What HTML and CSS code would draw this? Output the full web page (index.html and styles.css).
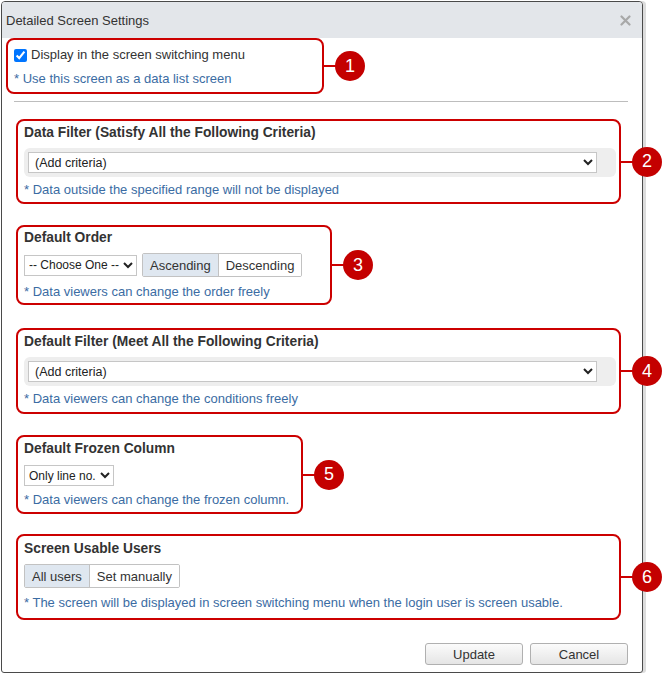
FILE: index.html
```html
<!DOCTYPE html>
<html>
<head>
<meta charset="utf-8">
<link rel="stylesheet" href="styles.css">
</head>
<body>
<div class="dialog">
  <div class="titlebar">
    <span class="title">Detailed Screen Settings</span>
    <svg class="close" width="11" height="11" viewBox="0 0 11 11"><path d="M1.5 1.5 L9.5 9.5 M9.5 1.5 L1.5 9.5" stroke="#a8a8a8" stroke-width="2.2" stroke-linecap="round"/></svg>
  </div>
  <div class="content">
    <section class="box box-menu">
      <label class="check-row"><input type="checkbox" checked> Display in the screen switching menu</label>
      <div class="note note-menu">* Use this screen as a data list screen</div>
      <span class="link"></span><span class="badge">1</span>
    </section>
    <hr class="sep">
    <section class="box box-wide box-filter">
      <div class="heading">Data Filter (Satisfy All the Following Criteria)</div>
      <div class="criteria-bar"><select class="criteria"><option>(Add criteria)</option></select></div>
      <div class="note note-tight">* Data outside the specified range will not be displayed</div>
      <span class="link"></span><span class="badge">2</span>
    </section>
    <section class="box box-order">
      <div class="heading">Default Order</div>
      <div class="controls">
        <select class="plain sel-order"><option>-- Choose One --</option></select>
        <div class="btn-group">
          <span class="seg active">Ascending</span><span class="seg">Descending</span>
        </div>
      </div>
      <div class="note">* Data viewers can change the order freely</div>
      <span class="link"></span><span class="badge">3</span>
    </section>
    <section class="box box-wide box-dfilter">
      <div class="heading">Default Filter (Meet All the Following Criteria)</div>
      <div class="criteria-bar"><select class="criteria"><option>(Add criteria)</option></select></div>
      <div class="note note-tight">* Data viewers can change the conditions freely</div>
      <span class="link"></span><span class="badge">4</span>
    </section>
    <section class="box box-frozen">
      <div class="heading">Default Frozen Column</div>
      <div class="controls controls-frozen">
        <select class="plain sel-frozen"><option>Only line no.</option></select>
      </div>
      <div class="note note-frozen">* Data viewers can change the frozen column.</div>
      <span class="link"></span><span class="badge">5</span>
    </section>
    <section class="box box-wide box-users">
      <div class="heading">Screen Usable Users</div>
      <div class="controls controls-users">
        <div class="btn-group">
          <span class="seg active">All users</span><span class="seg">Set manually</span>
        </div>
      </div>
      <div class="note note-users">* The screen will be displayed in screen switching menu when the login user is screen usable.</div>
      <span class="link"></span><span class="badge">6</span>
    </section>
  </div>
  <div class="footer">
    <button class="btn">Update</button>
    <button class="btn">Cancel</button>
  </div>
</div>
</body>
</html>
```

FILE: styles.css
```css
* { box-sizing: border-box; }
html, body { margin: 0; padding: 0; background: #fff; }
body {
  font-family: "Liberation Sans", Arial, sans-serif;
  font-size: 13px;
  color: #333;
}
.dialog {
  margin: 1px 0 0 1px;
  width: 642px;
  height: 672px;
  border: 1px solid #4a4a4a;
  border-radius: 4px 4px 3px 3px;
  display: flex;
  flex-direction: column;
  box-shadow: 3px 0 0 #dcdcdc;
  background: #fff;
}
.titlebar {
  height: 36px;
  background: #e3e6ea;
  display: flex;
  align-items: center;
  justify-content: space-between;
  padding: 0 11px 0 4px;
  border-radius: 3px 3px 0 0;
}
.title { font-size: 13px; color: #333; }
.close { display: block; }
.box {
  position: relative;
  border: 2px solid #cc0000;
  border-radius: 8px;
  margin-left: 14px;
  padding: 2px 6px 2px;
}
.box-menu {
  margin-left: 4px;
  width: 318px;
  height: 56px;
  padding: 5px 6px 0;
}
.check-row {
  display: flex;
  align-items: center;
  height: 20px;
  line-height: 20px;
}
.check-row input {
  margin: 0 4px 0 0;
  width: 13px;
  height: 13px;
}
.note {
  color: #3b6ca3;
  line-height: 18px;
  margin-top: 6px;
  font-size: 13px;
}
.note-menu { margin-top: 5px; }
.sep {
  border: 0;
  border-top: 1px solid #bdbdbd;
  margin: 7px 14px 0 12px;
  height: 0;
}
.box-wide { width: 605px; padding: 3px 3px 3px 6px; }
.box-filter { margin-top: 17px; }
.box-order { margin-top: 21px; width: 316px; }
.box-dfilter { margin-top: 23px; padding-bottom: 4px; }
.box-frozen { margin-top: 21px; width: 287px; padding: 3px 6px 3px; }
.box-users { margin-top: 20px; padding: 4px 3px 6px 6px; }
.heading {
  font-weight: bold;
  font-size: 13.8px;
  line-height: 18px;
}
.criteria-bar {
  margin-top: 6px;
  height: 29px;
  background: #eeeeee;
  border-radius: 6px;
  padding: 4px 19px 4px 4px;
}
.criteria {
  width: 100%;
  height: 21px;
  font-family: "Liberation Sans", Arial, sans-serif;
  font-size: 12.5px;
  border: 1px solid #c6c6c6;
  border-radius: 0;
  background: #fff;
  color: #222;
  padding: 0 2px;
}
.note-tight { margin-top: 4px; }
.controls {
  margin-top: 6px;
  display: flex;
  align-items: center;
  gap: 5px;
  height: 24px;
}
.controls-frozen { margin-top: 7px; height: 21px; }
.note-frozen { margin-top: 5px; }
.controls-users { margin-top: 6px; height: 24px; }
.note-users { margin-top: 6px; }
.plain {
  height: 21px;
  font-family: "Liberation Sans", Arial, sans-serif;
  font-size: 12px;
  border: 1px solid #c6c6c6;
  border-radius: 0;
  background: #fff;
  color: #222;
  padding: 0;
}
.sel-order { width: 113px; }
.sel-frozen { width: 90px; }
.btn-group {
  display: flex;
  height: 100%;
  border: 1px solid #c2c2c2;
  border-radius: 2px;
  overflow: hidden;
}
.seg {
  display: flex;
  align-items: center;
  padding: 0 7px;
  font-size: 13px;
  color: #333;
  background: #fff;
}
.seg + .seg { border-left: 1px solid #c2c2c2; }
.seg.active { background: #dfe7f0; }
.link {
  position: absolute;
  left: 100%;
  top: 50%;
  width: 13px;
  height: 2px;
  margin-top: -1px;
  margin-left: 1px;
  background: #cc0000;
}
.badge {
  position: absolute;
  left: calc(100% + 13px);
  top: 50%;
  width: 30px;
  height: 30px;
  margin-top: -15px;
  border-radius: 50%;
  background: #c40000;
  color: #fff;
  font-size: 18px;
  display: flex;
  align-items: center;
  justify-content: center;
  z-index: 2;
}
.footer {
  margin-top: auto;
  display: flex;
  justify-content: flex-end;
  gap: 7px;
  padding: 0 14px 7px 0;
}
.btn {
  width: 98px;
  height: 22px;
  font-family: "Liberation Sans", Arial, sans-serif;
  font-size: 13px;
  color: #333;
  border: 1px solid #b0b0b0;
  border-radius: 3px;
  background: linear-gradient(#fbfbfb, #e5e5e5);
  padding: 0;
}
```
